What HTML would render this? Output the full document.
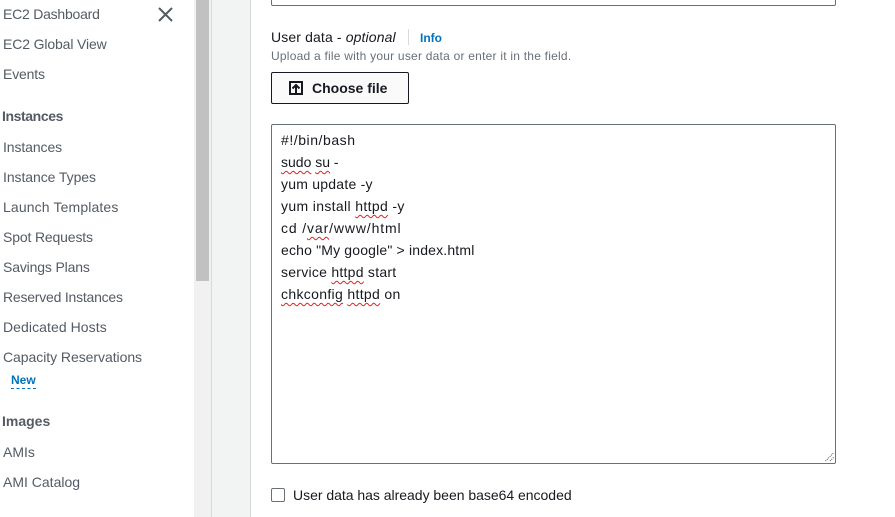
<!DOCTYPE html>
<html><head><meta charset="utf-8">
<style>
html,body{margin:0;padding:0;width:895px;height:517px;overflow:hidden;background:#fff}
body{position:relative;font-family:"Liberation Sans",sans-serif;font-size:14px;color:#16191f}
.a{position:absolute;white-space:nowrap;line-height:20px}
.n{left:3px;color:#545b64}
.h{left:2px;color:#545b64;font-weight:bold}
.t{left:281px;color:#16191f;line-height:22px}
.s{text-decoration:underline wavy #e02020 1px;text-underline-offset:3px}
</style></head><body>
<div class="a" style="left:194px;top:0;width:17px;height:517px;background:#f1f1f1"></div>
<div class="a" style="left:196px;top:0;width:13px;height:281px;background:#c1c1c1"></div>
<div class="a" style="left:211px;top:0;width:1px;height:517px;background:#d5dbdb"></div>
<div class="a" style="left:212px;top:0;width:38px;height:517px;background:#f2f3f3"></div>
<div class="a" style="left:250px;top:0;width:1px;height:517px;background:#d5dbdb"></div>

<div class="a n" style="top:4px;letter-spacing:-.23px">EC2 Dashboard</div>
<svg class="a" style="left:158px;top:7px" width="15" height="15" viewBox="0 0 15 15"><path d="M1 1L14 14M14 1L1 14" stroke="#545b64" stroke-width="2" fill="none"/></svg>
<div class="a n" style="top:34px;letter-spacing:-.13px">EC2 Global View</div>
<div class="a n" style="top:64px;letter-spacing:-.15px">Events</div>
<div class="a h" style="top:106px;letter-spacing:-.4px">Instances</div>
<div class="a n" style="top:137px;letter-spacing:-.1px">Instances</div>
<div class="a n" style="top:167px;letter-spacing:-.07px">Instance Types</div>
<div class="a n" style="top:197px;letter-spacing:.13px">Launch Templates</div>
<div class="a n" style="top:227px;letter-spacing:-.15px">Spot Requests</div>
<div class="a n" style="top:257px;letter-spacing:-.15px">Savings Plans</div>
<div class="a n" style="top:287px;letter-spacing:-.22px">Reserved Instances</div>
<div class="a n" style="top:317px;letter-spacing:.07px">Dedicated Hosts</div>
<div class="a n" style="top:347px;letter-spacing:-.05px">Capacity Reservations</div>
<div class="a" style="left:11px;top:372px;font-size:12px;font-weight:bold;color:#0073bb;border-bottom:1px dashed #0073bb;line-height:16px;height:16px">New</div>
<div class="a h" style="top:411px">Images</div>
<div class="a n" style="top:442px">AMIs</div>
<div class="a n" style="top:472px">AMI Catalog</div>

<div class="a" style="left:271px;top:-10px;width:563px;height:14px;border:1px solid #687078;border-radius:2px"></div>

<div class="a" style="left:271px;top:27px;color:#16191f;letter-spacing:.13px">User data - <i>optional</i></div>
<div class="a" style="left:408px;top:29px;width:1px;height:16px;background:#d5dbdb"></div>
<div class="a" style="left:420px;top:28px;font-size:12px;font-weight:bold;color:#0073bb">Info</div>
<div class="a" style="left:271px;top:46px;font-size:12px;color:#687078;letter-spacing:.23px">Upload a file with your user data or enter it in the field.</div>

<div class="a" style="left:271px;top:72px;width:136px;height:30px;border:1px solid #16191f;border-radius:2px;background:#fafafa"></div>
<svg class="a" style="left:289px;top:81px" width="14" height="14" viewBox="0 0 14 14"><path d="M4 1H1V13H13V1H10" stroke="#16191f" stroke-width="2" fill="none"/><path d="M1 1H13" stroke="#16191f" stroke-width="2"/><path d="M7 13V4M3.5 7.5L7 4L10.5 7.5" stroke="#16191f" stroke-width="2" fill="none"/></svg>
<div class="a" style="left:312px;top:78px;font-weight:bold;color:#16191f">Choose file</div>

<div class="a" style="left:271px;top:124px;width:563px;height:338px;border:1px solid #687078;border-radius:2px"></div>
<div class="a t" style="top:129px;letter-spacing:.55px">#!/bin/bash</div>
<div class="a t" style="top:151px"><span class="s">sudo</span> <span class="s">su</span> -</div>
<div class="a t" style="top:173px;letter-spacing:.23px">yum update -y</div>
<div class="a t" style="top:195px;letter-spacing:.35px">yum install <span class="s">httpd</span> -y</div>
<div class="a t" style="top:217px;letter-spacing:.87px">cd /<span class="s">var</span>/www/html</div>
<div class="a t" style="top:239px;letter-spacing:.17px">echo "My google" &gt; index.html</div>
<div class="a t" style="top:261px;letter-spacing:.26px">service <span class="s">httpd</span> start</div>
<div class="a t" style="top:283px;letter-spacing:.33px"><span class="s">chkconfig</span> <span class="s">httpd</span> on</div>
<svg class="a" style="left:825px;top:452px" width="10" height="10" viewBox="0 0 10 10"><path d="M0.5 9L9 0.5M5 9L9 5" stroke="#555" stroke-width="1" stroke-dasharray="1 1" fill="none"/></svg>

<div class="a" style="left:271px;top:488px;width:12px;height:12px;border:1px solid #687078;border-radius:2px"></div>
<div class="a" style="left:293px;top:485px;color:#16191f;letter-spacing:-.02px">User data has already been base64 encoded</div>
</body></html>
